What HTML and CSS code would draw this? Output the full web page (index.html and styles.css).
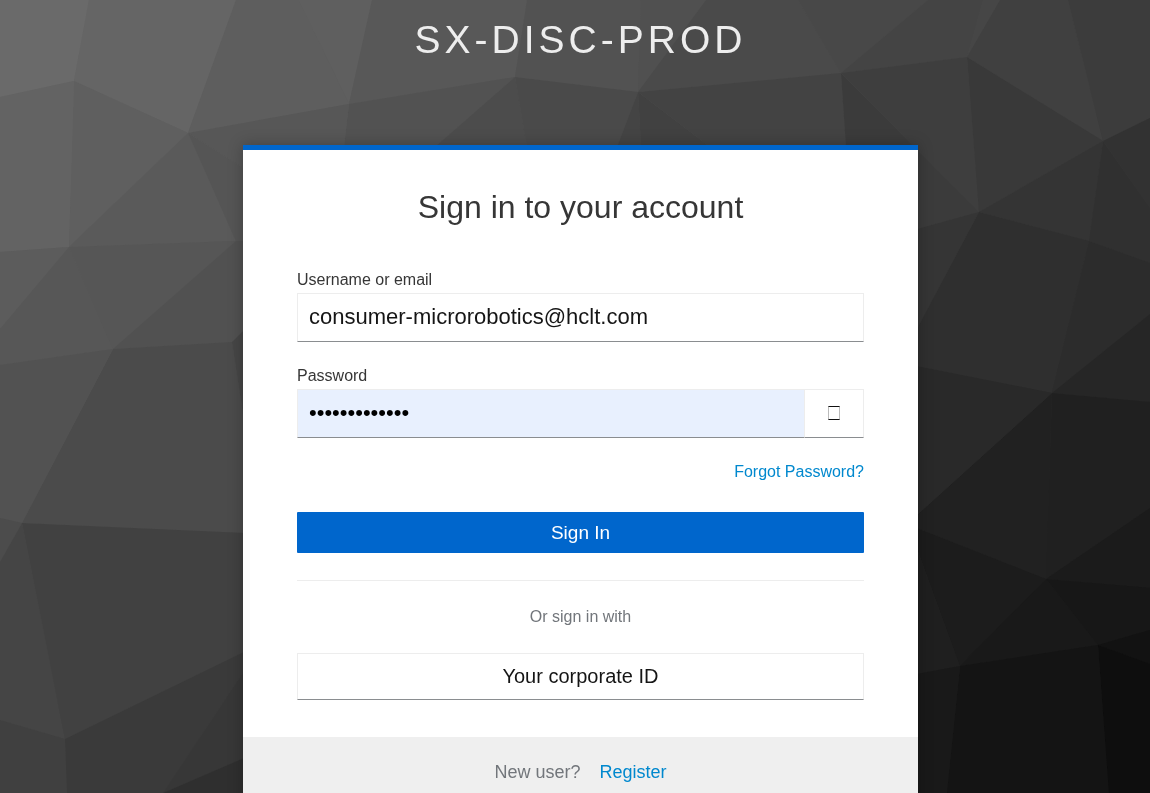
FILE: index.html
```html
<!DOCTYPE html>
<html lang="en">
<head>
<meta charset="UTF-8" />
<meta name="viewport" content="width=device-width, initial-scale=1" />
<title>Sign in to SX-DISC-PROD</title>
<link rel="stylesheet" href="styles.css">
</head>
<body>

<svg class="login-bg" viewBox="0 0 1150 793" preserveAspectRatio="xMidYMid slice" aria-hidden="true">
  <defs>
    <linearGradient id="base" x1="0" y1="0" x2="1" y2="1">
      <stop offset="0" stop-color="#6c6c6c" />
      <stop offset="0.5" stop-color="#454545" />
      <stop offset="1" stop-color="#0c0c0c" />
    </linearGradient>
  </defs>
  <rect width="1150" height="793" fill="url(#base)" />
  <!-- left side -->
  <polygon fill="#6a6a6a" points="0,0 89,0 74,81 0,97" />
  <polygon fill="#656565" points="89,0 236,0 188,133 74,81" />
  <polygon fill="#5e5e5e" points="236,0 299,0 349,104 188,133" />
  <polygon fill="#5f5f5f" points="299,0 372,0 349,104" />
  <polygon fill="#585858" points="372,0 527,0 515,77 349,104" />
  <polygon fill="#525252" points="349,104 515,77 435,147 344,147" />
  <polygon fill="#575757" points="188,133 349,104 344,147 243,168" />
  <polygon fill="#5f5f5f" points="74,81 188,133 69,247" />
  <polygon fill="#636363" points="74,81 69,247 0,252 0,97" />
  <polygon fill="#5a5a5a" points="188,133 236,241 69,247" />
  <polygon fill="#555555" points="188,133 243,168 243,241 236,241" />
  <polygon fill="#5c5c5c" points="69,247 0,329 0,252" />
  <polygon fill="#575757" points="69,247 113,349 0,365 0,329" />
  <polygon fill="#565656" points="69,247 236,241 113,349" />
  <polygon fill="#515151" points="236,241 244,241 244,330 232,342 113,349" />
  <polygon fill="#4b4b4b" points="113,349 232,342 244,420 244,533 22,523" />
  <polygon fill="#464646" points="232,342 244,330 244,420" />
  <polygon fill="#525252" points="0,365 113,349 22,523 0,518" />
  <polygon fill="#4c4c4c" points="0,518 22,523 0,562" />
  <polygon fill="#454545" points="22,523 65,739 0,720 0,562" />
  <polygon fill="#414141" points="22,523 244,533 244,652 65,739" />
  <polygon fill="#404040" points="65,739 67,793 0,793 0,720" />
  <polygon fill="#3a3a3a" points="65,739 244,652 244,671 163,793 67,793" />
  <polygon fill="#373737" points="244,671 244,758 163,793" />
  <polygon fill="#2f2f2f" points="163,793 244,758 244,793" />
  <!-- top -->
  <polygon fill="#525252" points="527,0 641,0 638,92 515,77" />
  <polygon fill="#505050" points="641,0 706,0 638,92" />
  <polygon fill="#4a4a4a" points="706,0 798,0 841,73 638,92" />
  <polygon fill="#484848" points="798,0 928,0 841,73" />
  <polygon fill="#444444" points="928,0 983,0 967,57 841,73" />
  <polygon fill="#464646" points="983,0 1000,0 967,57" />
  <polygon fill="#404040" points="1000,0 1068,0 1103,141 967,57" />
  <polygon fill="#3c3c3c" points="1068,0 1150,0 1150,118 1103,141" />
  <polygon fill="#4c4c4c" points="515,77 527,147 435,147" />
  <polygon fill="#4a4a4a" points="515,77 638,92 617,147 527,147" />
  <polygon fill="#444444" points="638,92 641,147 617,147" />
  <polygon fill="#414141" points="638,92 710,147 641,147" />
  <polygon fill="#434343" points="638,92 841,73 846,147 710,147" />
  <!-- right side -->
  <polygon fill="#3b3b3b" points="841,73 979,212 917,229 846,147" />
  <polygon fill="#3e3e3e" points="841,73 967,57 979,212" />
  <polygon fill="#393939" points="967,57 1103,141 979,212" />
  <polygon fill="#343434" points="1103,141 1089,241 979,212" />
  <polygon fill="#303030" points="1103,141 1150,208 1150,263 1089,241" />
  <polygon fill="#323232" points="1103,141 1150,118 1150,208" />
  <polygon fill="#353535" points="979,212 917,329 917,229" />
  <polygon fill="#2f2f2f" points="979,212 1089,241 1052,393 917,366 917,329" />
  <polygon fill="#2c2c2c" points="1089,241 1150,263 1150,314 1052,393" />
  <polygon fill="#262626" points="1052,393 1150,314 1150,402" />
  <polygon fill="#202020" points="1052,393 1150,402 1150,508 1046,579" />
  <polygon fill="#212121" points="1052,393 1046,579 917,528 917,515" />
  <polygon fill="#292929" points="1052,393 917,515 917,366" />
  <polygon fill="#1c1c1c" points="1046,579 960,666 917,549 917,528" />
  <polygon fill="#1f1f1f" points="960,666 917,674 917,549" />
  <polygon fill="#1b1b1b" points="1046,579 1150,508 1150,588" />
  <polygon fill="#171717" points="1046,579 1150,588 1150,630 1098,645" />
  <polygon fill="#191919" points="1046,579 1098,645 960,666" />
  <polygon fill="#121212" points="1098,645 1150,630 1150,664" />
  <polygon fill="#0e0e0e" points="1098,645 1150,664 1150,793 1109,793" />
  <polygon fill="#141414" points="960,666 1098,645 1109,793 947,793" />
  <polygon fill="#191919" points="960,666 947,793 917,793 917,674" />
</svg>

<div class="login-page">
  <header class="realm-name">SX-DISC-PROD</header>

  <main class="card">
    <div class="card-body">
      <h1>Sign in to your account</h1>

      <form onsubmit="return false">
        <div class="form-group">
          <label for="username">Username or email</label>
          <input class="form-control" id="username" type="text" value="consumer-microrobotics@hclt.com" autocomplete="username" />
        </div>

        <div class="form-group">
          <label for="password">Password</label>
          <div class="input-group">
            <input class="form-control filled" id="password" type="password" value="abcdefghijklm" autocomplete="current-password" />
            <button class="btn-eye" id="btnEye" type="button" aria-label="Show password"><span class="glyph"></span></button>
          </div>
        </div>

        <div class="forgot"><a href="#">Forgot Password?</a></div>

        <button class="btn-primary" type="submit">Sign In</button>
      </form>

      <div class="social">
        <h2>Or sign in with</h2>
        <a class="btn-social" href="#">Your corporate ID</a>
      </div>
    </div>

    <div class="card-footer">
      <span>New user?</span>
      <a href="#">Register</a>
    </div>
  </main>
</div>

<script>
  const password = document.getElementById('password');
  const btnEye = document.getElementById('btnEye');

  btnEye.addEventListener('click', () => {
    password.type = password.type === 'password' ? 'text' : 'password';
  });
</script>

</body>
</html>
```
FILE: styles.css
```css
* {
  box-sizing: border-box;
}
body {
  margin: 0;
  height: 100vh;
  overflow: hidden;
  background-color: #333;
  font-family: "Liberation Sans", Arial, sans-serif;
  font-size: 16px;
  line-height: 24px;
  color: #363636;
}
a {
  color: #0088ce;
  text-decoration: none;
}
.login-bg {
  position: fixed;
  top: 0;
  left: 0;
  width: 100%;
  height: 100%;
}
.login-page {
  position: relative;
  padding-left: 11px;
}
.realm-name {
  padding: 16px 0 81px;
  font-size: 39px;
  line-height: 48px;
  letter-spacing: 4px;
  text-align: center;
  color: #ededed;
}
.card {
  max-width: 675px;
  margin: 0 auto;
  background-color: #fff;
  border-top: 5px solid #06c;
  box-shadow: 0 0 14px rgba(0, 0, 0, 0.25);
}
.card-body {
  padding: 36px 54px 37px;
}
h1 {
  margin: 0 0 40px;
  font-size: 32px;
  line-height: 42px;
  font-weight: normal;
  text-align: center;
}
.form-group {
  margin-bottom: 22px;
}
.form-group label {
  display: block;
  padding-bottom: 2px;
  line-height: 23px;
}
.form-control {
  display: block;
  width: 100%;
  height: 49px;
  padding: 0 11px 2px;
  border: 1px solid #ededed;
  border-bottom-color: #8a8d90;
  border-radius: 0;
  outline: none;
  background-color: #fff;
  font-family: inherit;
  font-size: 22px;
  color: #151515;
}
.form-control.filled {
  background-color: #e8f0fe;
  color: #000;
}
.input-group {
  display: flex;
}
.input-group .form-control {
  flex: 1;
  border-right: none;
}
.btn-eye {
  display: flex;
  align-items: center;
  justify-content: center;
  width: 60px;
  padding: 0 0 2px;
  border: 1px solid #ededed;
  border-bottom-color: #8a8d90;
  background-color: #fff;
  cursor: pointer;
}
.glyph {
  width: 12px;
  height: 14px;
  border: 1px solid #111;
  border-left-color: #bbb;
  border-right-color: #bbb;
}
.forgot {
  text-align: right;
}
.btn-primary {
  display: block;
  width: 100%;
  height: 41px;
  margin-top: 28px;
  padding: 0;
  border: none;
  border-radius: 1px;
  background-color: #06c;
  color: #fff;
  font-family: inherit;
  font-size: 19px;
  cursor: pointer;
}
.btn-primary:hover {
  background-color: #004080;
}
.social {
  margin-top: 27px;
  border-top: 1px solid #ededed;
}
h2 {
  margin: 24px 0;
  font-size: 16px;
  font-weight: normal;
  text-align: center;
  color: #72767b;
}
.btn-social {
  display: block;
  padding: 10px 0;
  border: 1px solid #ededed;
  border-bottom-color: #8a8d90;
  font-size: 20px;
  line-height: 25px;
  text-align: center;
  color: #151515;
}
.card-footer {
  display: flex;
  justify-content: center;
  gap: 19px;
  padding: 23px 54px 40px;
  background-color: #efefef;
  font-size: 18px;
  color: #72767b;
}
```
